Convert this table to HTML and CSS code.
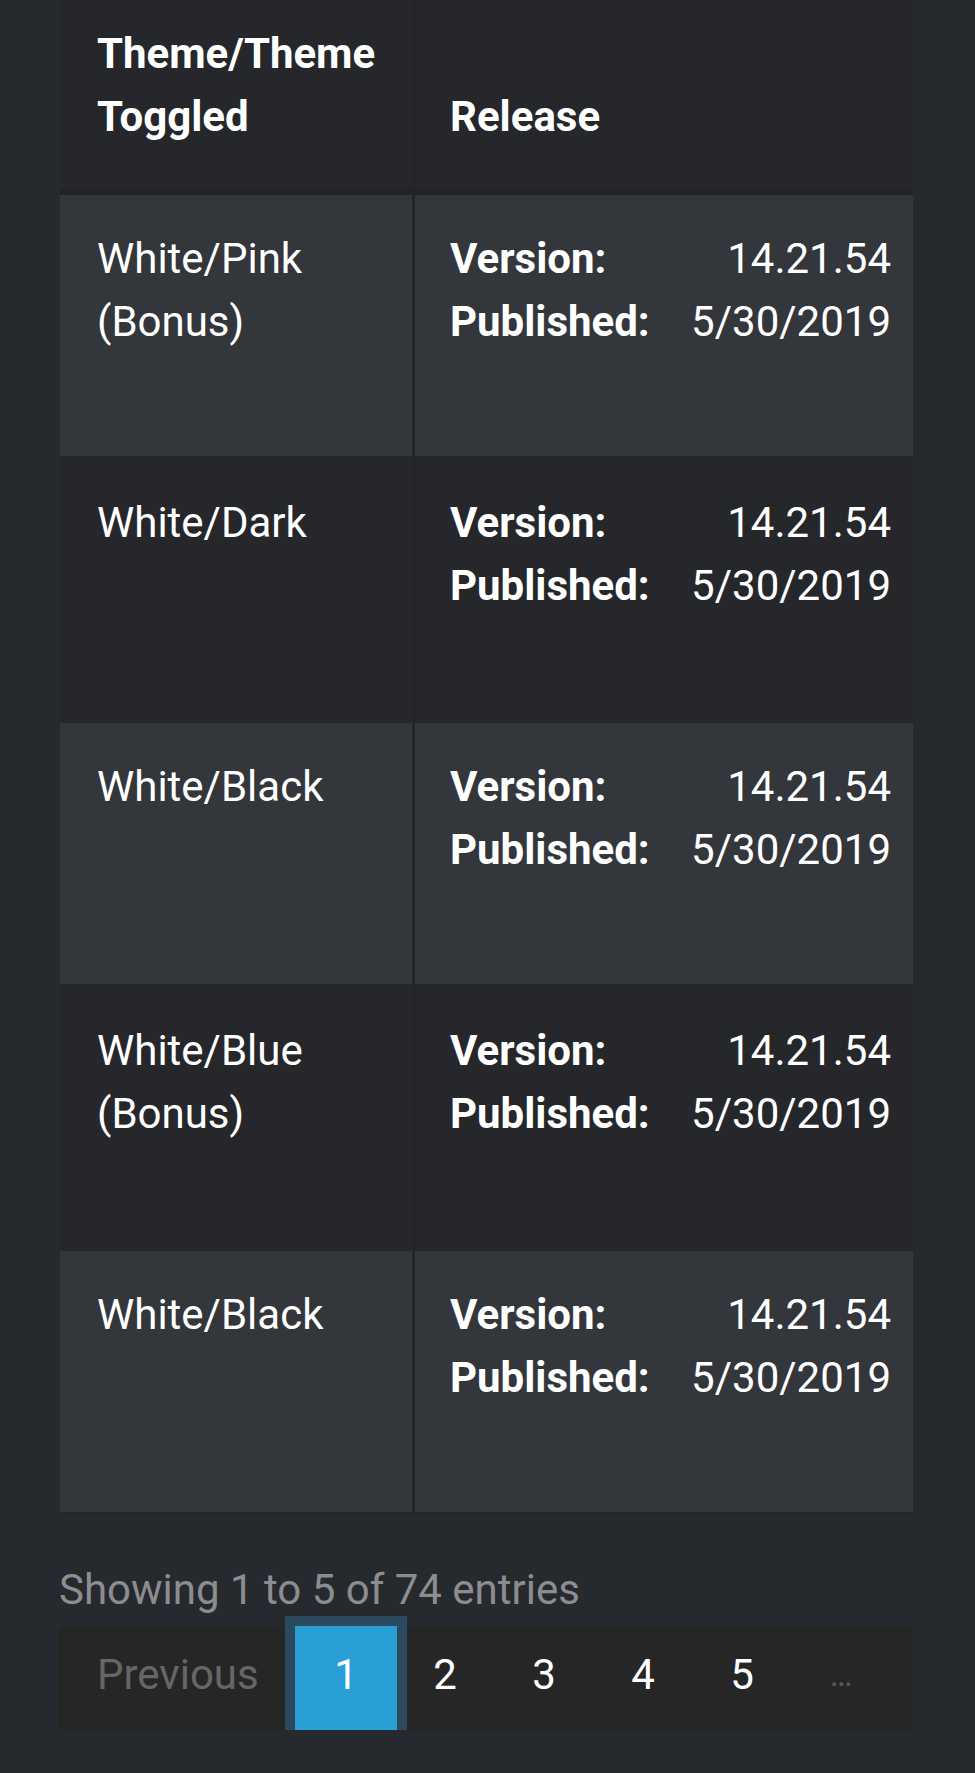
FILE: index.html
```html
<!DOCTYPE html>
<html lang="en">
  <head>
    <meta charset="UTF-8" />
    <meta name="viewport" content="width=device-width, initial-scale=1.0" />
    <title>Themes</title>
    <link rel="stylesheet" href="styles.css">
  </head>
  <body>
    <div id="themes-wrapper">
      <table id="themes" class="themes-table">
        <thead>
          <tr>
            <th class="col-theme">Theme/Theme Toggled</th>
            <th class="col-release">Release</th>
          </tr>
        </thead>
        <tbody>
          <tr class="odd">
            <td class="col-theme">White/Pink (Bonus)</td>
            <td class="col-release">
              <dl class="release">
                <dt>Version:</dt><dd>14.21.54</dd>
                <dt>Published:</dt><dd>5/30/2019</dd>
              </dl>
            </td>
          </tr>
          <tr class="even">
            <td class="col-theme">White/Dark</td>
            <td class="col-release">
              <dl class="release">
                <dt>Version:</dt><dd>14.21.54</dd>
                <dt>Published:</dt><dd>5/30/2019</dd>
              </dl>
            </td>
          </tr>
          <tr class="odd">
            <td class="col-theme">White/Black</td>
            <td class="col-release">
              <dl class="release">
                <dt>Version:</dt><dd>14.21.54</dd>
                <dt>Published:</dt><dd>5/30/2019</dd>
              </dl>
            </td>
          </tr>
          <tr class="even">
            <td class="col-theme">White/Blue (Bonus)</td>
            <td class="col-release">
              <dl class="release">
                <dt>Version:</dt><dd>14.21.54</dd>
                <dt>Published:</dt><dd>5/30/2019</dd>
              </dl>
            </td>
          </tr>
          <tr class="odd">
            <td class="col-theme">White/Black</td>
            <td class="col-release">
              <dl class="release">
                <dt>Version:</dt><dd>14.21.54</dd>
                <dt>Published:</dt><dd>5/30/2019</dd>
              </dl>
            </td>
          </tr>
        </tbody>
      </table>

      <div class="table-info">Showing 1 to 5 of 74 entries</div>

      <ul class="pagination">
        <li class="page-item disabled"><a class="page-link prev" href="#">Previous</a></li>
        <li class="page-item active"><a class="page-link" href="#">1</a></li>
        <li class="page-item"><a class="page-link" href="#">2</a></li>
        <li class="page-item"><a class="page-link" href="#">3</a></li>
        <li class="page-item"><a class="page-link" href="#">4</a></li>
        <li class="page-item"><a class="page-link" href="#">5</a></li>
        <li class="page-item disabled"><a class="page-link ellipsis" href="#">…</a></li>
      </ul>
    </div>
  </body>
</html>
```

FILE: styles.css
```css
html {
  background: #26292d;
}

body {
  margin: 0;
  font-family: Roboto, "Liberation Sans", sans-serif;
  font-size: 42px;
  line-height: 63px;
  color: #fff;
}

#themes-wrapper {
  padding: 0 62px 0 58px;
}

.themes-table {
  width: 853px;
  margin-left: 2px;
  border-collapse: separate;
  border-spacing: 0;
  table-layout: fixed;
  background: #25272b;
}

.themes-table th,
.themes-table td {
  box-sizing: border-box;
  text-align: left;
}

.themes-table th {
  padding: 22px 22px 41px 37px;
  font-weight: 700;
  vertical-align: bottom;
  border-bottom: 6px solid #212326;
}

.themes-table td {
  padding: 32px 22px 103px 37px;
  font-weight: 400;
  vertical-align: top;
  border-bottom: 3px solid #25272b;
}

.themes-table .col-release {
  padding-left: 35px;
}

.col-theme {
  width: 355px;
  border-right: 3px solid #222427;
}

.themes-table tr.odd td {
  background: #33363b;
}

.release {
  display: grid;
  grid-template-columns: auto 1fr;
  margin: 0;
}

.release dt {
  font-weight: 700;
}

.release dd {
  margin: 0;
  text-align: right;
}

.table-info {
  margin-top: 43px;
  padding-left: 1px;
  color: #8b8d90;
}

.pagination {
  display: flex;
  width: 855px;
  margin: 5px 0 0;
  padding: 0;
  list-style: none;
  background: #262626;
  border-radius: 5px;
}

.page-item {
  display: block;
}

.page-link {
  display: block;
  box-sizing: border-box;
  width: 102px;
  margin-left: -3px;
  padding: 17px 0 24px;
  text-align: center;
  color: #fff;
  text-decoration: none;
}

.page-link.prev {
  width: 240px;
  margin-left: 0;
  padding-left: 39px;
  text-align: left;
  color: #666;
}

.page-item.active .page-link {
  position: relative;
  background: #2a9fd6;
  box-shadow: 0 0 0 10px #2b4a5d;
}

.page-link.ellipsis {
  color: #5a5a5a;
  font-size: 34px;
}
```
